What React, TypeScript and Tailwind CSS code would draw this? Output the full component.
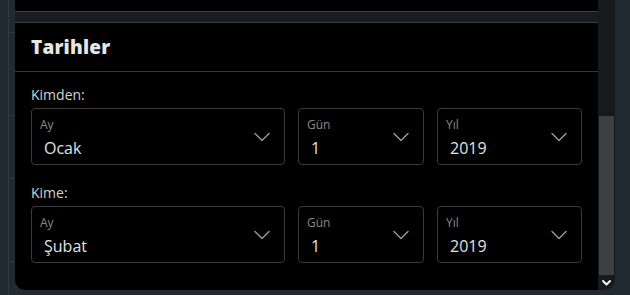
import React from 'react';

type SelectProps = {
  label: string;
  value: string;
};

const Chevron = () => (
  <svg width="16" height="10" viewBox="0 0 16 10" fill="none" className="shrink-0 self-center">
    <path d="M1 1.5l7 7 7-7" stroke="#9c9c9c" strokeWidth="1.4" strokeLinecap="round" strokeLinejoin="round" />
  </svg>
);

const DateSelect = ({ label, value }: SelectProps) => (
  <div className="flex h-[57px] justify-between rounded border border-[#3b3b3b] pr-[14px]">
    <div className="flex flex-col pt-[8px]">
      <span className="pl-[8px] text-[12px] leading-4 text-[#8a8a8a]">{label}</span>
      <span className="mt-[3px] pl-[12px] text-[16px] leading-6 text-[#e2e2e2]">{value}</span>
    </div>
    <Chevron />
  </div>
);

const rows = [
  { title: 'Kimden:', month: 'Ocak', day: '1', year: '2019' },
  { title: 'Kime:', month: 'Şubat', day: '1', year: '2019' },
];

const App = () => {
  return (
    <div
      className="flex h-[295px] w-[630px] overflow-hidden bg-[#222a31]"
      style={{ fontFamily: '"Open Sans", "Noto Sans", sans-serif' }}
    >
      {/* left gutter */}
      <div className="flex w-[15px] shrink-0">
        <div className="w-[8px]" />
        <div className="flex w-[7px] flex-col border-l border-[#2f3942]">
          <div className="h-[33px] border-b border-[#2f3942]" />
          <div className="h-[83px] border-b border-[#2f3942]" />
          <div className="h-[63px] border-b border-[#2f3942]" />
          <div className="h-[83px] border-b border-[#2f3942]" />
        </div>
      </div>

      <div className="flex h-[290px] w-[600px] shrink-0 overflow-hidden rounded-b-[10px]">
        <div className="flex w-[583px] flex-col bg-black">
          <div className="h-[12px] border-b border-[#3a3f45]" />
          <div className="h-[11px] border-b border-[#3a3f45] bg-[#181b1f]" />

          <div className="flex h-[49px] items-center border-b border-[#363636] px-4">
            <h2 className="text-[19px] font-extrabold tracking-[0.2px] text-[#e6e6e6]">Tarihler</h2>
          </div>

          <div className="flex flex-col gap-[18px] px-4 pt-[13px]">
            {rows.map((row) => (
              <div key={row.title} className="flex flex-col">
                <label className="mb-[3px] text-[14px] leading-5 text-[#d2d2d2]">{row.title}</label>
                <div className="grid grid-cols-[254px_126px_145px] gap-[13px]">
                  <DateSelect label="Ay" value={row.month} />
                  <DateSelect label="Gün" value={row.day} />
                  <DateSelect label="Yıl" value={row.year} />
                </div>
              </div>
            ))}
          </div>
        </div>

        {/* scrollbar */}
        <div className="flex w-[17px] flex-col bg-[#17191c]">
          <div className="h-[116px]" />
          <div className="ml-[1px] h-[159px] w-[15px] bg-[#3c3f43]" />
          <div className="flex flex-1 items-center justify-center">
            <svg width="9" height="6" viewBox="0 0 9 6" fill="none">
              <path d="M1 1l3.5 3.5L8 1" stroke="#ffffff" strokeWidth="1.8" strokeLinecap="round" strokeLinejoin="round" />
            </svg>
          </div>
        </div>
      </div>
    </div>
  );
};

export default App;
